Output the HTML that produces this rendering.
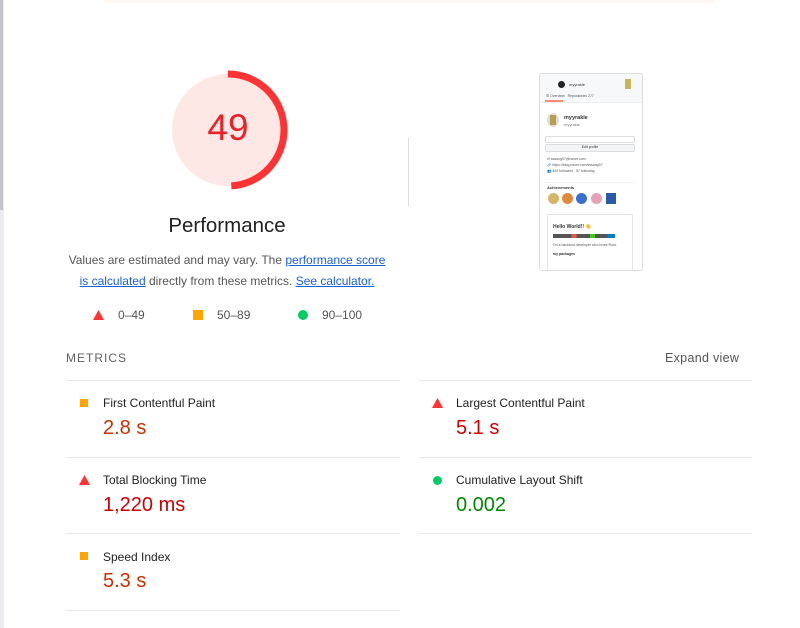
<!DOCTYPE html>
<html><head><style>
body{margin:0;width:800px;height:628px;background:#fff;font-family:"Liberation Sans",Arial,sans-serif;position:relative;overflow:hidden;color:#212121}
.a{position:absolute}
.lbl{font-size:12px;color:#212121}
.val{font-size:20px}
.line{position:absolute;height:1px;background:#e8e8e8}
a{color:#1a5fd6;text-decoration:underline}
</style></head><body>
<div class="a" style="left:0;top:0;width:4px;height:628px;background:#ececf0"></div>
<div class="a" style="left:0;top:0;width:3px;height:210px;background:#c4c4c8"></div>
<div class="a" style="left:102px;top:-6px;width:616px;height:9px;background:#fff7f3;border-radius:0 0 6px 6px"></div>

<svg class="a" style="left:167px;top:69px" width="122" height="122" viewBox="0 0 122 122">
<circle cx="61" cy="61" r="56" fill="#fde8e6"/>
<circle cx="61" cy="61" r="56" fill="none" stroke="#f33" stroke-width="7" stroke-dasharray="172.4 400" transform="rotate(-90 61 61)"/>
</svg>
<div class="a" style="left:167px;top:107px;width:122px;text-align:center;font-size:37px;color:#e8212a">49</div>
<div class="a" style="left:127px;top:214px;width:200px;text-align:center;font-size:20.5px;color:#212121">Performance</div>
<div class="a" style="left:66px;top:250px;width:322px;text-align:center;font-size:12px;line-height:21px;color:#555">Values are estimated and may vary. The <a>performance score is calculated</a> directly from these metrics. <a>See calculator.</a></div>

<svg class="a" style="left:93px;top:310px" width="11" height="10"><polygon points="5.5,0 11,10 0,10" fill="#f33"/></svg>
<div class="a" style="left:118px;top:308px;font-size:12px;color:#555">0–49</div>
<div class="a" style="left:193px;top:310px;width:10px;height:10px;background:#ffa400"></div>
<div class="a" style="left:217px;top:308px;font-size:12px;color:#555">50–89</div>
<div class="a" style="left:298px;top:310px;width:10px;height:10px;border-radius:50%;background:#0c6"></div>
<div class="a" style="left:322px;top:308px;font-size:12px;color:#555">90–100</div>

<div class="a" style="left:408px;top:138px;width:1px;height:68px;background:#ddd"></div>

<div class="a" style="left:539px;top:73px;width:102px;height:196px;border:1px solid #ddd;border-radius:3px;background:#fff;overflow:hidden;font-size:4px;color:#333">
 <div style="background:#f6f8fa;height:28px;border-bottom:1px solid #eee;position:relative">
  <div class="a" style="left:18px;top:7px;width:7px;height:7px;border-radius:50%;background:#222"></div>
  <div class="a" style="left:29px;top:8px;font-size:4px">myyrakle</div>
  <div class="a" style="left:85px;top:5px;width:6px;height:10px;background:#c9b45a"></div>
  <div class="a" style="left:6px;top:20px;font-size:3.5px;color:#555">☰ Overview &nbsp; Repositories 277</div>
  <div class="a" style="left:5px;top:26px;width:18px;height:1.5px;background:#fd8c73"></div>
 </div>
 <div class="a" style="left:7px;top:39px;width:12px;height:14px;border-radius:50%;background:#ddd;overflow:hidden"><div style="margin:2px 3px;width:6px;height:10px;background:#b8a04a"></div></div>
 <div class="a" style="left:24px;top:41px;font-size:5.5px;font-weight:bold">myyrakle</div>
 <div class="a" style="left:24px;top:48px;font-size:4px;color:#777">myyrakle</div>
 <div class="a" style="left:5px;top:62px;width:88px;height:5px;border:1px solid #ddd;border-radius:2px"></div>
 <div class="a" style="left:5px;top:70px;width:88px;height:6px;background:#f3f4f6;border:1px solid #ddd;border-radius:2px;text-align:center;font-size:3.5px">Edit profile</div>
 <div class="a" style="left:7px;top:82px;font-size:3.5px;color:#555;line-height:6px">✉ sssang97@naver.com<br>🔗 https://blog.naver.com/sssang97<br>👥 444 followers · 57 following</div>
 <div class="a" style="left:5px;top:108px;width:88px;height:1px;background:#eee"></div>
 <div class="a" style="left:7px;top:111px;font-size:4px;font-weight:bold">Achievements</div>
 <div class="a" style="left:8px;top:119px;width:11px;height:11px;border-radius:50%;background:#d7b46a"></div>
 <div class="a" style="left:22px;top:119px;width:11px;height:11px;border-radius:50%;background:#e08a3a"></div>
 <div class="a" style="left:36px;top:119px;width:11px;height:11px;border-radius:50%;background:#3b6fcf"></div>
 <div class="a" style="left:51px;top:119px;width:11px;height:11px;border-radius:50%;background:#e8a0b8"></div>
 <div class="a" style="left:66px;top:119px;width:10px;height:11px;background:#2a5aa8"></div>
 <div class="a" style="left:7px;top:140px;width:84px;height:60px;border:1px solid #e5e5e5;border-radius:2px">
  <div style="margin:4px 0 0 5px;font-size:5px;font-weight:bold;padding-top:5px">Hello World!! 👋</div>
  <div style="margin:4px 0 0 5px;width:62px;height:4px;background:linear-gradient(90deg,#555 0 30%,#e05d44 30% 38%,#555 38% 60%,#4c1 60% 68%,#555 68% 88%,#007ec6 88%)"></div>
  <div style="margin:5px 0 0 5px;font-size:3.5px;color:#555">I'm a backend developer who loves Rust.</div>
  <div style="margin:5px 0 0 5px;font-size:3.5px;font-weight:bold">my packages</div>
 </div>
</div>

<div class="a" style="left:66px;top:351px;font-size:12px;letter-spacing:1px;color:#616161">METRICS</div>
<div class="a" style="left:665px;top:351px;font-size:12.5px;color:#555;letter-spacing:.3px">Expand view</div>

<div class="line" style="left:66px;top:380px;width:334px"></div>
<div class="line" style="left:419px;top:380px;width:333px"></div>
<div class="line" style="left:66px;top:457px;width:334px"></div>
<div class="line" style="left:419px;top:457px;width:333px"></div>
<div class="line" style="left:66px;top:533px;width:334px"></div>
<div class="line" style="left:419px;top:533px;width:333px"></div>
<div class="line" style="left:66px;top:610px;width:334px"></div>

<div class="a" style="left:80px;top:399px;width:8px;height:8px;background:#ffa400"></div>
<div class="a lbl" style="left:103px;top:396px">First Contentful Paint</div>
<div class="a val" style="left:103px;top:417px;color:#c33300">2.8 s</div>

<svg class="a" style="left:432px;top:398px" width="11" height="10"><polygon points="5.5,0 11,10 0,10" fill="#f33"/></svg>
<div class="a lbl" style="left:456px;top:396px">Largest Contentful Paint</div>
<div class="a val" style="left:456px;top:417px;color:#c00">5.1 s</div>

<svg class="a" style="left:79px;top:475px" width="11" height="10"><polygon points="5.5,0 11,10 0,10" fill="#f33"/></svg>
<div class="a lbl" style="left:103px;top:473px">Total Blocking Time</div>
<div class="a val" style="left:103px;top:494px;color:#c00">1,220 ms</div>

<div class="a" style="left:433px;top:476px;width:9px;height:9px;border-radius:50%;background:#0c6"></div>
<div class="a lbl" style="left:456px;top:473px">Cumulative Layout Shift</div>
<div class="a val" style="left:456px;top:494px;color:#080">0.002</div>

<div class="a" style="left:80px;top:552px;width:8px;height:8px;background:#ffa400"></div>
<div class="a lbl" style="left:103px;top:550px">Speed Index</div>
<div class="a val" style="left:103px;top:570px;color:#c33300">5.3 s</div>
</body></html>
